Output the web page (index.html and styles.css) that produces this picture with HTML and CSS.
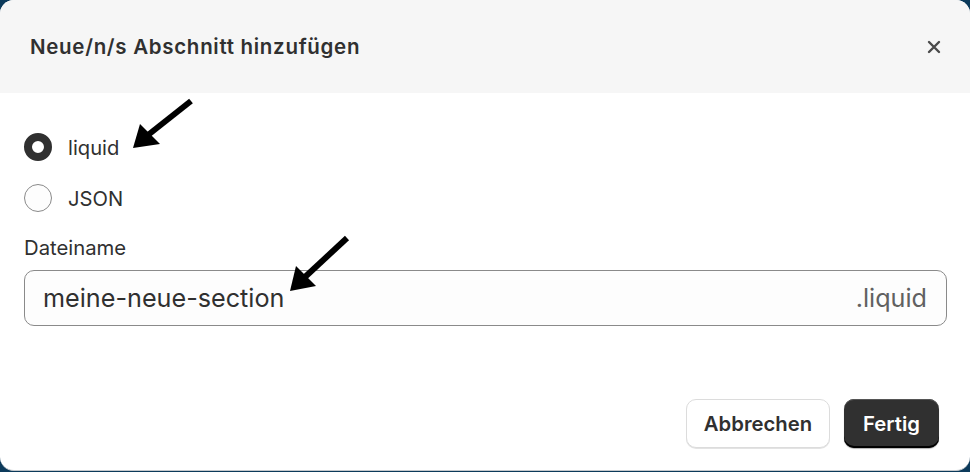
FILE: index.html
```html
<!DOCTYPE html>
<html lang="de">
<head>
<meta charset="utf-8">
<link rel="stylesheet" href="styles.css">
</head>
<body>
<div class="modal">
  <div class="header">
    <h1 class="title">Neue/n/s Abschnitt hinzufügen</h1>
    <button class="close" aria-label="Schließen">
      <svg width="14" height="14" viewBox="0 0 14 14"><path d="M2 2 L12 12 M12 2 L2 12" stroke="#4a4a4a" stroke-width="2.4" stroke-linecap="round"/></svg>
    </button>
  </div>
  <div class="body">
    <label class="radio-row"><span class="radio checked"></span><span class="radio-label">liquid</span></label>
    <label class="radio-row second"><span class="radio"></span><span class="radio-label">JSON</span></label>
    <div class="field-label">Dateiname</div>
    <div class="input">
      <span class="value">meine-neue-section</span>
      <span class="suffix">.liquid</span>
    </div>
  </div>
  <div class="footer">
    <button class="btn secondary">Abbrechen</button>
    <button class="btn primary">Fertig</button>
  </div>
  <svg class="arrows" width="970" height="472" viewBox="0 0 970 472">
    <g stroke="#000" stroke-width="6" stroke-linecap="butt">
      <line x1="191" y1="101" x2="148" y2="135"/>
      <line x1="347" y1="238" x2="305" y2="277"/>
    </g>
    <polygon points="133,148 140,124 160,144" fill="#000"/>
    <polygon points="290,291 296,266 316,286" fill="#000"/>
  </svg>
</div>
</body>
</html>
```

FILE: styles.css
```css
* { box-sizing: border-box; }
html, body {
  margin: 0;
  padding: 0;
  width: 970px;
  height: 472px;
  overflow: hidden;
  background: #0c3a5b;
  font-family: Inter, "Noto Sans", "Liberation Sans", sans-serif;
  color: #303030;
}
.modal {
  position: relative;
  width: 970px;
  height: 471px;
  background: #fff;
  border-radius: 14px;
  overflow: hidden;
  display: flex;
  flex-direction: column;
  border-bottom: 1px solid #c5c9cd;
}
.header {
  height: 93px;
  background: #f6f6f6;
  display: flex;
  align-items: center;
  justify-content: space-between;
  padding: 0 30px 0 30px;
}
.title {
  margin: 0;
  font-size: 20.5px;
  font-weight: 620;
  color: #303030;
  letter-spacing: 0.7px;
}
.close {
  border: 0;
  background: transparent;
  padding: 0;
  width: 20px;
  height: 20px;
  display: flex;
  align-items: center;
  justify-content: center;
  margin-right: -4px;
}
.body {
  display: flex;
  flex-direction: column;
  padding: 40px 24px 0 24px;
}
.radio-row {
  display: flex;
  align-items: center;
  height: 28px;
}
.radio-row.second { margin-top: 23px; }
.radio {
  width: 28px;
  height: 28px;
  border-radius: 50%;
  border: 1.5px solid #8a8a8a;
  background: #fdfdfd;
  flex: none;
}
.radio.checked {
  border: 8px solid #303030;
  background: #fff;
}
.radio-label {
  margin-left: 16px;
  font-size: 20.2px;
  color: #303030;
}
.field-label {
  margin-top: 24px;
  font-size: 20.3px;
  line-height: 24px;
  color: #303030;
}
.input {
  margin-top: 10px;
  width: 923px;
  height: 56px;
  border: 1px solid #8a8a8a;
  border-radius: 10px;
  background: #fdfdfd;
  display: flex;
  align-items: center;
  justify-content: space-between;
  padding: 0 19px 0 18px;
  font-size: 25.2px;
}
.value { color: #303030; }
.suffix { color: #616161; }
.footer {
  margin-top: auto;
  display: flex;
  justify-content: flex-end;
  gap: 14px;
  padding: 0 31px 22px 0;
}
.btn {
  height: 49px;
  border-radius: 10px;
  font-family: inherit;
  font-size: 20.3px;
  font-weight: 620;
  padding: 0;
}
.btn.secondary {
  width: 144px;
  background: #fff;
  color: #303030;
  border: 1.5px solid #dcdcdc;
  box-shadow: 0 1px 0 #e3e3e3;
}
.btn.primary {
  width: 95px;
  background: #303030;
  color: #fff;
  border: 0;
  box-shadow: inset 0 -2px 0 #000, 0 1px 1px rgba(0,0,0,0.3), inset 0 1px 0 #555;
}
.arrows {
  position: absolute;
  left: 0;
  top: 0;
  pointer-events: none;
}
```
